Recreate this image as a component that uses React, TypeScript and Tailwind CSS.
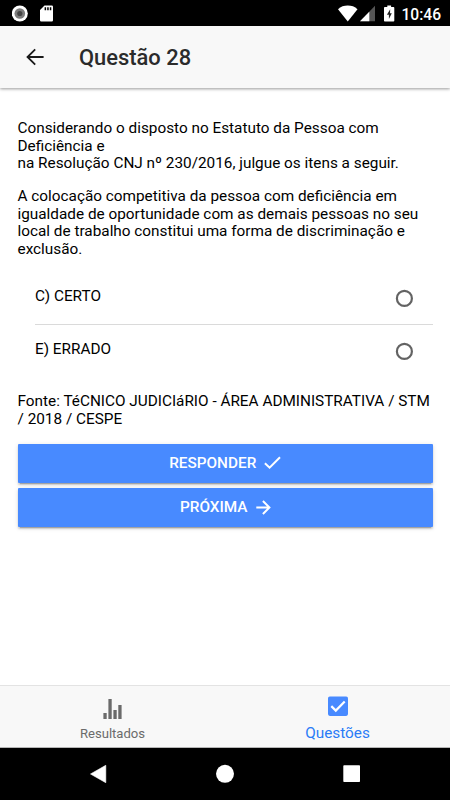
import React from 'react';

interface OptionProps {
  label: string;
  divider?: boolean;
}

const StatusBar: React.FC = () => (
  <div className="h-[26px] shrink-0 bg-black flex items-center justify-between pl-3 pr-[9px] text-white">
    <div className="flex items-center gap-[11px]">
      <svg width="17" height="17" viewBox="0 0 17 17">
        <circle cx="7.800" cy="8.500" r="8" fill="#fff" />
        <circle cx="7.800" cy="8.500" r="5.300" fill="#7c7c7c" />
        <circle cx="7.800" cy="8.500" r="2.600" fill="#444" />
      </svg>
      <svg width="14" height="17" viewBox="0 0 14 17">
        <path d="M4.500 .5h7.300A1.200 1.200 0 0 1 13 1.700v13.600a1.200 1.200 0 0 1-1.200 1.200H1.200A1.200 1.200 0 0 1 0 15.300V5z" fill="#fff" />
        <path d="M4.600 2.300h1.500v2.900H4.600zM7.200 2.300h1.500v2.900H7.200zM9.800 2.300h1.500v2.900H9.800z" fill="#000" />
      </svg>
    </div>
    <div className="flex items-center">
      <svg width="20" height="17" viewBox="0 0 20 17">
        <path d="M0 4.200C2.800 1.600 6 .5 9.750 .5s7 1.100 9.750 3.700L9.750 16.500z" fill="#fff" />
      </svg>
      <svg className="ml-[2px]" width="15" height="17" viewBox="0 0 15 17">
        <path d="M15 .8v15.500H0z" fill="#555" />
        <path d="M9.300 6.700v9.600H0z" fill="#fff" />
      </svg>
      <svg className="ml-[9px]" width="11" height="17" viewBox="0 0 11 17">
        <path d="M3.300 .5h3.800v1.600h2.400a.8.8 0 0 1 .8.8v12.800a.8.8 0 0 1-.8.8H.8a.8.8 0 0 1-.8-.8V2.900a.8.8 0 0 1 .8-.8h2.500z" fill="#fff" />
        <path d="M6.200 4.300L2.900 9.700h2v4.200l2.900-5.600H6z" fill="#222" />
      </svg>
      <span className="ml-[7px] mt-[3px] w-[39.500px] text-right text-[15.600px] leading-[18px] font-medium">10:46</span>
    </div>
  </div>
);

const Header: React.FC = () => (
  <header className="relative z-10 h-[62px] shrink-0 bg-[#f8f8f8] flex items-center pl-[26px] shadow-[0_1px_3px_rgba(0,0,0,0.4)]">
    <svg width="18" height="18" viewBox="0 0 18 18" fill="none" stroke="#1a1a1a" strokeWidth="1.8">
      <path d="M17.600 9H1.500M9.200 1.300L1.500 9l7.700 7.700" />
    </svg>
    <h1 className="ml-[35px] mt-[2px] text-[21.900px] leading-[26px] font-medium text-[#2b2b2b]">Questão 28</h1>
  </header>
);

const Option: React.FC<OptionProps> = ({ label, divider }) => (
  <div
    className={
      divider
        ? 'h-[53px] flex items-center justify-between pr-5 border-b border-[#dadada]'
        : 'h-[52px] flex items-center justify-between pr-5'
    }
  >
    <span className="-mt-[3px]">{label}</span>
    <svg width="18" height="18" viewBox="0 0 18 18" fill="none" stroke="#636363" strokeWidth="2.200">
      <circle cx="9.400" cy="9.400" r="7.500" />
    </svg>
  </div>
);

const ActionButton: React.FC<{ label: string; children: React.ReactNode }> = ({ label, children }) => (
  <button className="w-full h-[39px] flex items-center justify-center bg-[#488aff] rounded-[1px] text-white text-[15.330px] font-medium shadow-[0_2px_2px_0_rgba(0,0,0,0.14),0_3px_1px_-2px_rgba(0,0,0,0.2),0_1px_5px_0_rgba(0,0,0,0.12)]">
    <span className="mt-[1px]">{label}</span>
    {children}
  </button>
);

const TabBar: React.FC = () => (
  <nav className="h-[63px] shrink-0 flex bg-[#f8f8f8] border-t border-[#e3e3e3] border-b border-b-[#b5b5b5]">
    <div className="flex-1 flex flex-col items-center text-[#6b6b6b]">
      <svg className="mt-[13px]" width="20" height="20" viewBox="0 0 20 20" fill="currentColor">
        <path d="M.4 14h3.300v6H.4zM5.400 0h3.300v20H5.400zM10.400 11h3.300v9h-3.300zM15.300 6h3.300v14h-3.300z" />
      </svg>
      <span className="mt-[7px] text-[13.100px] leading-4">Resultados</span>
    </div>
    <div className="flex-1 flex flex-col items-center text-[#488aff]">
      <svg className="mt-[10px]" width="20" height="20" viewBox="0 0 20 20">
        <rect y=".4" width="20" height="19.500" rx="1.800" fill="#488aff" />
        <path d="M3.300 10.100l4.500 4.500 8.900-9" fill="none" stroke="#fff" strokeWidth="2.200" />
      </svg>
      <span className="mt-[9px] text-[15.330px] leading-4 text-[#2a7cf7]">Questões</span>
    </div>
  </nav>
);

const NavigationBar: React.FC = () => (
  <div className="h-[52px] shrink-0 bg-black">
    <svg width="450" height="52" viewBox="0 0 450 52" fill="#fff">
      <path d="M105.800 17.300v17.400L90.500 26z" stroke="#fff" strokeWidth=".6" strokeLinejoin="round" />
      <circle cx="225" cy="25.800" r="9" />
      <rect x="343.300" y="17.300" width="16.700" height="16.700" rx=".8" />
    </svg>
  </div>
);

const App: React.FC = () => {
  return (
    <div className="w-[450px] h-[800px] flex flex-col bg-white overflow-hidden font-[Roboto,sans-serif] text-[15.330px] leading-[17.600px] text-black">
      <StatusBar />
      <Header />
      <main className="flex-1 pt-[32px] pl-[17.500px] pr-[17px]">
        <p>
          Considerando o disposto no Estatuto da Pessoa com Deficiência e
          <br />
          na Resolução CNJ nº 230/2016, julgue os itens a seguir.
        </p>
        <p className="mt-[15.330px]">
          A colocação competitiva da pessoa com deficiência em igualdade de oportunidade com as demais pessoas no seu
          local de trabalho constitui uma forma de discriminação e exclusão.
        </p>
        <div className="mt-[14px] pl-[17.500px]">
          <Option label="C) CERTO" divider />
          <Option label="E) ERRADO" />
        </div>
        <p className="mt-[16px]">Fonte: TéCNICO JUDICIáRIO - ÁREA ADMINISTRATIVA / STM / 2018 / CESPE</p>
        <div className="mt-[15px] flex flex-col gap-[5px]">
          <ActionButton label="RESPONDER">
            <svg className="ml-[8px]" width="17" height="14" viewBox="0 0 17 14" fill="none" stroke="#fff" strokeWidth="2">
              <path d="M.9 7.200l4.700 4.500L16 1.200" />
            </svg>
          </ActionButton>
          <ActionButton label="PRÓXIMA">
            <svg className="ml-[8px]" width="15" height="15" viewBox="0 0 15 15" fill="none" stroke="#fff" strokeWidth="2">
              <path d="M.3 7.500h13M6.900 1l6.500 6.500L6.900 14" />
            </svg>
          </ActionButton>
        </div>
      </main>
      <TabBar />
      <NavigationBar />
    </div>
  );
};

export default App;
